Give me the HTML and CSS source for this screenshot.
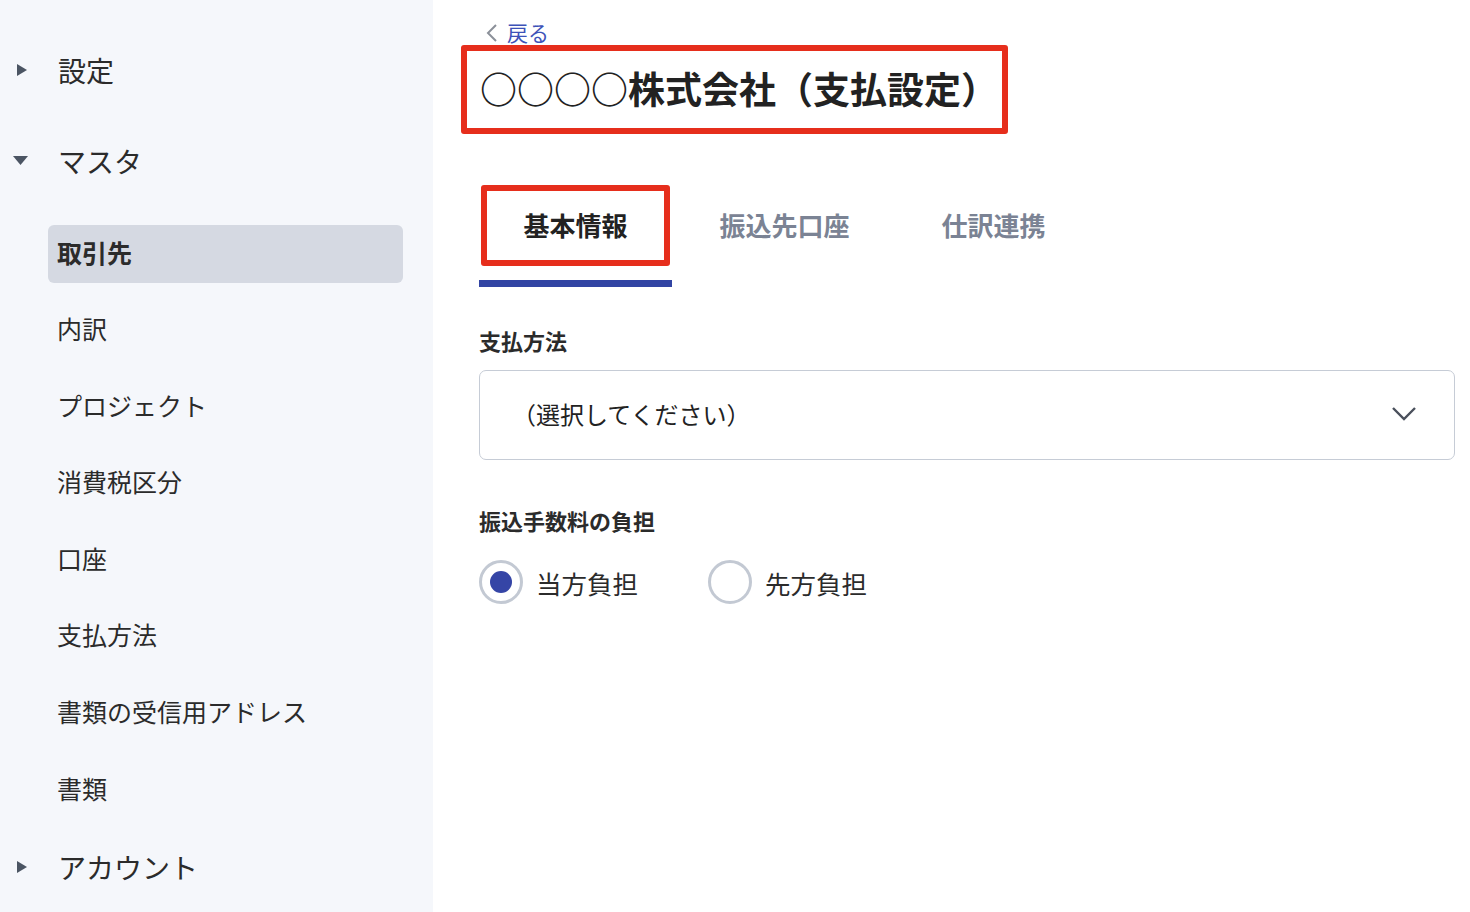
FILE: index.html
```html
<!DOCTYPE html>
<html lang="ja">
<head>
    <meta charset="UTF-8">
    <meta name="viewport" content="width=device-width, initial-scale=1.0">
    <title>取引先 - 支払設定</title>
    <link rel="stylesheet" href="styles.css">
</head>
<body>

<aside class="sidebar">
    <div class="nav-head">
        <span class="caret">
            <svg width="16" height="16" viewBox="0 0 16 16"><polygon points="4,2 14,8 4,14" fill="#4b5563"/></svg>
        </span>
        設定
    </div>
    <div class="nav-head nav-open">
        <span class="caret">
            <svg width="16" height="16" viewBox="0 0 16 16"><polygon points="0,3 15,3 7.5,12" fill="#4b5563"/></svg>
        </span>
        マスタ
    </div>
    <ul class="nav-sub">
        <li class="active">取引先</li>
        <li>内訳</li>
        <li>プロジェクト</li>
        <li>消費税区分</li>
        <li>口座</li>
        <li>支払方法</li>
        <li>書類の受信用アドレス</li>
        <li>書類</li>
    </ul>
    <div class="nav-head nav-last">
        <span class="caret">
            <svg width="16" height="16" viewBox="0 0 16 16"><polygon points="4,2 14,8 4,14" fill="#4b5563"/></svg>
        </span>
        アカウント
    </div>
</aside>

<main class="content">
    <a class="back-link" href="#">
        <svg width="12" height="18" viewBox="0 0 12 18"><polyline points="10,1 2,9 10,17" fill="none" stroke="#8b9099" stroke-width="2"/></svg>
        戻る
    </a>

    <h1 class="page-title">○○○○株式会社（支払設定）</h1>

    <div class="tabs">
        <div class="tab active"><span class="tab-label">基本情報</span><span class="tab-bar"></span></div>
        <div class="tab"><span class="tab-label">振込先口座</span><span class="tab-bar"></span></div>
        <div class="tab"><span class="tab-label">仕訳連携</span><span class="tab-bar"></span></div>
    </div>

    <div class="field">
        <div class="field-label">支払方法</div>
        <div class="select">
            <span>（選択してください）</span>
            <svg width="26" height="16" viewBox="0 0 26 16"><polyline points="2,2 13,13 24,2" fill="none" stroke="#4a505c" stroke-width="2.4"/></svg>
        </div>
    </div>

    <div class="field">
        <div class="field-label">振込手数料の負担</div>
        <div class="radios">
            <label class="radio checked"><span class="radio-dot"></span>当方負担</label>
            <label class="radio"><span class="radio-dot"></span>先方負担</label>
        </div>
    </div>
</main>

</body>
</html>
```

FILE: styles.css
```css
body {
    font-family: "Noto Sans CJK JP", "Noto Sans", sans-serif;
    margin: 0;
    padding: 0;
    display: flex;
    min-height: 912px;
    color: #222;
    background-color: white;
}

/* sidebar */
.sidebar {
    width: 433px;
    flex-shrink: 0;
    background-color: #f5f7fb;
    padding-top: 42px;
    box-sizing: border-box;
}
.nav-head {
    display: flex;
    align-items: center;
    height: 58px;
    padding-left: 13px;
    padding-bottom: 2px;
    box-sizing: border-box;
    font-size: 28px;
    color: #2b2b2b;
}
.nav-open {
    margin-top: 33px;
}
.nav-last {
    margin-top: 20px;
}
.caret {
    display: flex;
    width: 16px;
    margin-right: 29px;
}
.nav-sub {
    list-style: none;
    margin: 34px 0 0 0;
    padding: 0;
}
.nav-sub li {
    margin-left: 48px;
    width: 355px;
    height: 58px;
    margin-bottom: 18.6px;
    padding: 0 0 5px 9px;
    box-sizing: border-box;
    display: flex;
    align-items: center;
    font-size: 25px;
    border-radius: 6px;
    color: #2b2b2b;
}
.nav-sub li:last-child {
    margin-bottom: 0;
}
.nav-sub li.active {
    background-color: #d5d9e2;
    font-weight: bold;
}

/* main */
.content {
    flex: 1;
    padding: 20px 15px 0 46px;
}
.back-link {
    display: flex;
    align-items: center;
    gap: 9px;
    margin-left: 7px;
    font-size: 21px;
    line-height: 25px;
    color: #3d52b8;
    text-decoration: none;
}
.page-title {
    display: inline-block;
    margin: 0 0 0 -18px;
    padding: 0 4px 0 13px;
    height: 89px;
    line-height: 75px;
    box-sizing: border-box;
    border: 6px solid #e62e1c;
    border-radius: 3px;
    font-size: 37px;
    font-weight: bold;
    color: #222;
}

.tabs {
    display: flex;
    gap: 16px;
    margin-top: 51px;
}
.tab {
    width: 193px;
    display: flex;
    flex-direction: column;
    align-items: center;
}
.tab-label {
    width: 189px;
    height: 81px;
    box-sizing: border-box;
    border: 6px solid transparent;
    border-radius: 3px;
    padding-bottom: 2px;
    display: flex;
    align-items: center;
    justify-content: center;
    font-size: 26px;
    font-weight: bold;
    color: #7b8394;
}
.tab-bar {
    width: 100%;
    height: 7px;
    margin-top: 14px;
}
.tab.active .tab-label {
    border-color: #e62e1c;
    color: #222;
}
.tab.active .tab-bar {
    background-color: #3244a3;
}

.field {
    margin-top: 38px;
}
.field + .field {
    margin-top: 45px;
}
.field-label {
    font-size: 22px;
    line-height: 30px;
    font-weight: bold;
    color: #2b2b2b;
}
.select {
    margin-top: 15px;
    height: 90px;
    box-sizing: border-box;
    border: 1.5px solid #c6ccd6;
    border-radius: 7px;
    display: flex;
    align-items: center;
    justify-content: space-between;
    padding: 0 37px 3px 32px;
    font-size: 24px;
    color: #222;
}
.radios {
    display: flex;
    gap: 70px;
    margin-top: 25px;
}
.radio {
    display: flex;
    align-items: center;
    gap: 13px;
    font-size: 25.5px;
    color: #2b2b2b;
}
.radio-dot {
    width: 44px;
    height: 44px;
    box-sizing: border-box;
    border: 3.5px solid #c3c9d3;
    border-radius: 50%;
    display: flex;
    align-items: center;
    justify-content: center;
}
.radio.checked .radio-dot::after {
    content: "";
    width: 22px;
    height: 22px;
    border-radius: 50%;
    background-color: #3545a6;
}
```
